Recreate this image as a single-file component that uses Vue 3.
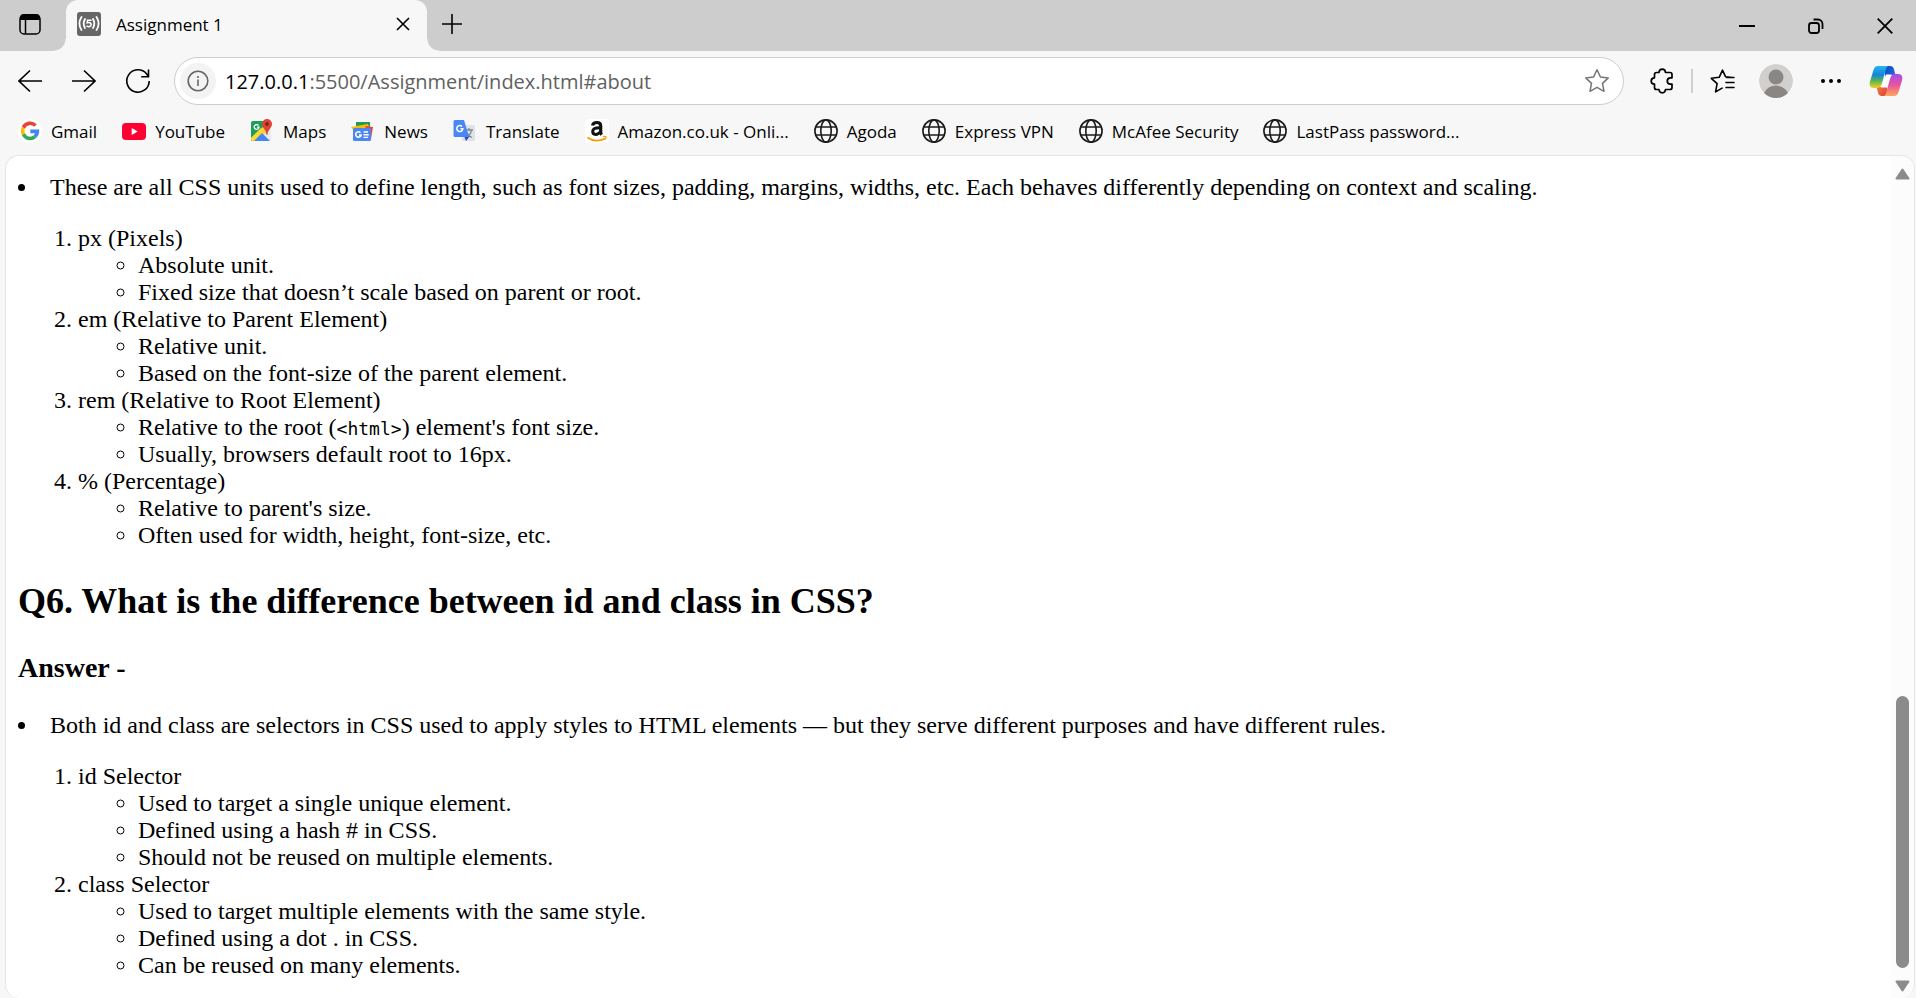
<script setup>
const bookmarks = [
  { label: 'Gmail', icon: 'google' },
  { label: 'YouTube', icon: 'youtube' },
  { label: 'Maps', icon: 'maps' },
  { label: 'News', icon: 'news' },
  { label: 'Translate', icon: 'translate' },
  { label: 'Amazon.co.uk - Onli...', icon: 'amazon' },
  { label: 'Agoda', icon: 'globe' },
  { label: 'Express VPN', icon: 'globe' },
  { label: 'McAfee Security', icon: 'globe' },
  { label: 'LastPass password...', icon: 'globe' },
]

const units = [
  { title: 'px (Pixels)', points: ['Absolute unit.', 'Fixed size that doesn’t scale based on parent or root.'] },
  { title: 'em (Relative to Parent Element)', points: ['Relative unit.', 'Based on the font-size of the parent element.'] },
  {
    title: 'rem (Relative to Root Element)',
    points: [['Relative to the root (', '<html>', ") element's font size."], 'Usually, browsers default root to 16px.'],
  },
  { title: '% (Percentage)', points: ["Relative to parent's size.", 'Often used for width, height, font-size, etc.'] },
]

const selectors = [
  {
    title: 'id Selector',
    points: ['Used to target a single unique element.', 'Defined using a hash # in CSS.', 'Should not be reused on multiple elements.'],
  },
  {
    title: 'class Selector',
    points: ['Used to target multiple elements with the same style.', 'Defined using a dot . in CSS.', 'Can be reused on many elements.'],
  },
]
</script>

<template>
  <div class="browser">
    <header class="tabstrip">
      <button class="workspaces" aria-label="Tab actions menu">
        <svg width="24" height="24" viewBox="0 0 24 24" fill="none" stroke="#000">
          <rect x="2" y="3" width="20" height="19" rx="4" stroke-width="1.5" />
          <path d="M2 8V6a4 4 0 0 1 4-4h12a4 4 0 0 1 4 4v2z" fill="#000" stroke="none" />
          <path d="M7.500 7.500V22" stroke-width="1.500" />
        </svg>
      </button>
      <div class="tab">
        <svg class="favicon" width="24" height="24" viewBox="0 0 24 24">
          <rect width="24" height="24" rx="3" fill="#666" />
          <g fill="none" stroke="#fff" stroke-width="1.800" stroke-linecap="round">
            <path d="M4.500 5a12 12 0 0 0 0 13M8 7a9 9 0 0 0 0 9M19.500 5a12 12 0 0 1 0 13M16 7a9 9 0 0 1 0 9" />
            <path d="M14 8.300h-3.500l-.3 2.600c2-.7 4-.1 4 1.700 0 2-2.500 2.600-4.200 1.500" stroke-width="1.500" />
          </g>
        </svg>
        <span class="tab-title">Assignment 1</span>
        <button class="tab-close" aria-label="Close tab">
          <svg width="14" height="14" viewBox="0 0 14 14" stroke="#000" stroke-width="1.600"><path d="M1 1l12 12M13 1L1 13" /></svg>
        </button>
      </div>
      <button class="newtab" aria-label="New tab">
        <svg width="22" height="22" viewBox="0 0 22 22" stroke="#000" stroke-width="1.600"><path d="M11 1v20M1 11h20" /></svg>
      </button>
      <div class="window-controls">
        <button aria-label="Minimize">
          <svg width="16" height="16" viewBox="0 0 16 16" stroke="#000" stroke-width="2"><path d="M0 8h16" /></svg>
        </button>
        <button aria-label="Restore">
          <svg width="16" height="16" viewBox="0 0 16 16" fill="none" stroke="#000" stroke-width="1.800">
            <rect x="1" y="5" width="10" height="10" rx="2.500" />
            <path d="M5.500 1.500H10a4.500 4.500 0 0 1 4.500 4.500v5" />
          </svg>
        </button>
        <button aria-label="Close">
          <svg width="16" height="16" viewBox="0 0 16 16" stroke="#000" stroke-width="1.800"><path d="M.7.700l14.600 14.600M15.300.700L.7 15.300" /></svg>
        </button>
      </div>
    </header>

    <nav class="toolbar">
      <button class="tool" aria-label="Back">
        <svg width="24" height="24" viewBox="0 0 24 24" fill="none" stroke="#000" stroke-width="1.600"><path d="M24 12H.8M12 1.500L1 12l11 10.500" /></svg>
      </button>
      <button class="tool" aria-label="Forward">
        <svg width="24" height="24" viewBox="0 0 24 24" fill="none" stroke="#000" stroke-width="1.600"><path d="M0 12h23.200M12 1.500L23 12 12 22.500" /></svg>
      </button>
      <button class="tool" aria-label="Refresh">
        <svg width="26" height="26" viewBox="0 0 26 26" fill="none" stroke="#000" stroke-width="1.600">
          <path d="M24.200 13A11.200 11.200 0 1 1 21.500 5.700L23.500 8.500M23.500 1.500v7.200h-7.300" />
        </svg>
      </button>
      <div class="address">
        <button class="site-info" aria-label="View site information">
          <svg width="22" height="22" viewBox="0 0 22 22" fill="none" stroke="#666" stroke-width="1.600">
            <circle cx="11" cy="11" r="9.800" />
            <path d="M11 9.500v6.500" />
            <path d="M11 6v2" />
          </svg>
        </button>
        <a class="url" href="#about"><b>127.0.0.1</b>:5500/Assignment/index.html#about</a>
        <button class="favorite" aria-label="Add to favorites">
          <svg width="26" height="26" viewBox="0 0 26 26" fill="none" stroke="#767676" stroke-width="1.500" stroke-linejoin="round">
            <path d="M13 1.700l3.400 7.200 7.900 1-5.800 5.500 1.500 7.900-7-3.900-7 3.900 1.500-7.900L1.700 9.900l7.900-1z" />
          </svg>
        </button>
      </div>
      <div class="actions">
        <button class="ext" aria-label="Extensions">
          <svg width="24" height="26" viewBox="0 0 24 26" fill="none" stroke="#000" stroke-width="1.700" stroke-linejoin="round">
            <path d="M6.500 4.500H9c.3-4.400 6.200-4.400 6.500 0H20a2 2 0 0 1 2 2v3.300h-1.500c-4.300.2-4.300 6.200 0 6.400H22v3.300a2 2 0 0 1-2 2h-4.500c-.3 4.400-6.200 4.400-6.500 0H6.500a2 2 0 0 1-2-2v-3.300c-4.400-.2-4.400-6.200 0-6.400V6.500a2 2 0 0 1 2-2z" />
          </svg>
        </button>
        <span class="divider"></span>
        <button class="favs" aria-label="Favorites">
          <svg width="25" height="25" viewBox="0 0 25 25" fill="none" stroke="#000" stroke-width="1.600" stroke-linejoin="round" stroke-linecap="round">
            <path d="M22.500 8.500l-7-.8-3-6.500-3.300 7.100-7.900 1 5.800 5.400-1.500 8.200 6.500-3.800M16.500 8.500H24M16 13.500h8M16 18.500h8" />
          </svg>
        </button>
        <button class="profile" aria-label="Profile">
          <svg width="34" height="34" viewBox="0 0 34 34">
            <defs><clipPath id="avatar"><circle cx="17" cy="17" r="17" /></clipPath></defs>
            <g clip-path="url(#avatar)">
              <circle cx="17" cy="17" r="17" fill="#d2d0ce" />
              <circle cx="17" cy="13" r="7.500" fill="#8a8684" />
              <ellipse cx="17" cy="34" rx="13" ry="12.500" fill="#8a8684" />
            </g>
          </svg>
        </button>
        <button class="more" aria-label="Settings and more">
          <svg width="20" height="6" viewBox="0 0 20 6"><circle cx="2" cy="3" r="2" /><circle cx="10" cy="3" r="2" /><circle cx="18" cy="3" r="2" /></svg>
        </button>
        <button class="copilot" aria-label="Copilot">
          <svg width="34" height="32" viewBox="0 0 34 32">
            <defs>
              <linearGradient id="cpa" x1="0" y1="0" x2="0" y2="1"><stop offset="0" stop-color="#25b7f0" /><stop offset=".4" stop-color="#1583e0" /><stop offset=".65" stop-color="#4fb35c" /><stop offset="1" stop-color="#f6cf1a" /></linearGradient>
              <linearGradient id="cpb" x1="0" y1="0" x2="0" y2="1"><stop offset="0" stop-color="#a04df0" /><stop offset=".5" stop-color="#e8549c" /><stop offset="1" stop-color="#ffa85c" /></linearGradient>
              <linearGradient id="cpc" x1="0" y1="0" x2="1" y2="1"><stop offset="0" stop-color="#0a49c0" /><stop offset="1" stop-color="#2a6fe8" /></linearGradient>
              <linearGradient id="cpd" x1="0" y1="0" x2="1" y2="1"><stop offset="0" stop-color="#fb8a3c" /><stop offset="1" stop-color="#d93a3a" /></linearGradient>
            </defs>
            <path d="M16 1h5c2.500 0 3.500 1.500 4 3.500L26.500 10H20c-2 0-3 .5-4 3z" fill="url(#cpc)" />
            <path d="M18 31h-5c-2.500 0-3.500-1.500-4-3.500L7.500 22H14c2 0 3-.5 4-3z" fill="url(#cpd)" />
            <path d="M17 9.500h5.500L18 22.500h-6z" fill="#fff" />
            <path d="M9 1h11c-2 0-2.800 2-3.300 4l-4 14c-.7 2.300-2 4-4.700 4H4.500C1 23 0 20 1 16.500L4.500 5C5.300 2.500 6.500 1 9 1z" fill="url(#cpa)" />
            <path d="M25 31H14c2 0 2.800-2 3.300-4l4-14c.7-2.300 2-4 4.700-4h3.500c3.500 0 4.500 3 3.500 6.500L29.500 27c-.8 2.500-2 4-4.500 4z" fill="url(#cpb)" />
          </svg>
        </button>
      </div>
    </nav>

    <nav class="bookmarks" aria-label="Favorites bar">
      <a v-for="b in bookmarks" :key="b.label" href="#" class="bookmark">
        <svg v-if="b.icon === 'google'" width="24" height="24" viewBox="0 0 24 24">
          <circle cx="12" cy="12" r="12" fill="#fff" />
          <g fill="none" stroke-width="3.600">
            <path d="M17.500 6.500A7.400 7.400 0 0 0 5.400 8.700" stroke="#ea4335" />
            <path d="M5.400 8.700a7.400 7.400 0 0 0 0 6.600" stroke="#fbbc05" />
            <path d="M5.400 15.300a7.400 7.400 0 0 0 11.600 2.300" stroke="#34a853" />
            <path d="M17 17.600a7.400 7.400 0 0 0 2.400-5.200H12.300" stroke="#4285f4" />
          </g>
        </svg>
        <svg v-else-if="b.icon === 'youtube'" width="24" height="24" viewBox="0 0 24 24">
          <rect y="4" width="24" height="17" rx="4" fill="#ff0033" />
          <path d="M9.700 9v7l6-3.500z" fill="#fff" />
        </svg>
        <svg v-else-if="b.icon === 'maps'" width="24" height="24" viewBox="0 0 24 24">
          <rect x="1" y="2" width="20" height="20" rx="2" fill="#e8eaed" />
          <path d="M3 2h13v6L2 22H1V4a2 2 0 0 1 2-2z" fill="#1e9e58" />
          <path d="M1 19L15 6l3 6L7 22H3a2 2 0 0 1-2-2z" fill="#fdd835" />
          <path d="M4 22l8-8 8 8z" fill="#4285f4" />
          <path d="M1 19L11 9l2 3L3 22a2 2 0 0 1-2-2z" fill="#fdd835" />
          <path d="M8.500 6.500A2.400 2.400 0 1 0 9 8.200H7" fill="none" stroke="#fff" stroke-width="1.300" />
          <path d="M17 0a5 5 0 0 1 5 5c0 4-4 5-4.600 11h-.8C16 10 12 9 12 5a5 5 0 0 1 5-5z" fill="#dc4437" />
          <circle cx="17" cy="5" r="1.900" fill="#7b231c" />
        </svg>
        <svg v-else-if="b.icon === 'news'" width="24" height="24" viewBox="0 0 24 24">
          <path d="M5 3h14v8H5z" fill="#1e9e58" />
          <path d="M0 8l17-3 2 7H3z" fill="#fbbc04" />
          <path d="M14 7l8 1-2 12z" fill="#ea4335" />
          <rect x="2" y="9" width="18" height="13" rx="1.500" fill="#4a86f5" />
          <path d="M9.500 13.700a2.700 2.700 0 1 0 .6 2.300H8" fill="none" stroke="#fff" stroke-width="1.600" />
          <path d="M12.500 13H17M12.500 15.700h5.300M12.500 18.400H17" stroke="#fff" stroke-width="1.400" />
        </svg>
        <svg v-else-if="b.icon === 'translate'" width="24" height="24" viewBox="0 0 24 24">
          <rect x="9" y="6" width="13" height="16" rx="1.500" fill="#dfe2e6" />
          <path d="M12 11h8M16 9v2M18.500 11c-.5 3.500-3 6-5.500 7M13.500 13c1 2.500 3 4.500 5.500 5.500" fill="none" stroke="#7d8a94" stroke-width="1.300" />
          <path d="M11 17h6l-4 5z" fill="#3949ab" />
          <path d="M2 1h9l5 17H2a1.500 1.500 0 0 1-1.500-1.500v-14A1.500 1.500 0 0 1 2 1z" fill="#4a86f5" />
          <path d="M9 7.500a3 3 0 1 0 .8 2.300H7.500" fill="none" stroke="#fff" stroke-width="1.600" />
        </svg>
        <svg v-else-if="b.icon === 'amazon'" width="24" height="24" viewBox="0 0 24 24">
          <rect width="24" height="24" rx="4" fill="#fff" />
          <path d="M7.500 6.500C8 3.800 10 3.500 12 3.500s3.700 1 3.700 3.500v6.300c0 1.200.4 1.700 1 2.500" fill="none" stroke="#111" stroke-width="3.200" />
          <path d="M15 8.700c-4.500 0-7.300.8-7.300 3.900 0 3.800 5.300 3.500 7.300.4" fill="none" stroke="#111" stroke-width="3" />
          <path d="M2.500 18.500c5.500 4 12.500 4 17.500 1" fill="none" stroke="#ff9900" stroke-width="1.800" />
          <path d="M18 17.700c1.500-.4 2.700-.4 3 0 .2.600-.2 2-1.200 3" fill="none" stroke="#ff9900" stroke-width="1.200" />
        </svg>
        <svg v-else width="24" height="24" viewBox="0 0 24 24" fill="none" stroke="#1b1b1b" stroke-width="1.600">
          <circle cx="12" cy="12" r="11.100" />
          <ellipse cx="12" cy="12" rx="5.200" ry="11.100" />
          <path d="M1.700 8h20.600M1.700 16h20.600" />
        </svg>
        <span>{{ b.label }}</span>
      </a>
    </nav>

    <div class="viewport">
      <main class="document">
        <ul class="lead"><li>These are all CSS units used to define length, such as font sizes, padding, margins, widths, etc. Each behaves differently depending on context and scaling.</li></ul>
        <ol>
          <li v-for="u in units" :key="u.title">
            {{ u.title }}
            <ul>
              <li v-for="(p, i) in u.points" :key="i">
                <template v-if="Array.isArray(p)">{{ p[0] }}<code>{{ p[1] }}</code>{{ p[2] }}</template>
                <template v-else>{{ p }}</template>
              </li>
            </ul>
          </li>
        </ol>
        <h2 id="about">Q6. What is the difference between id and class in CSS?</h2>
        <h3>Answer -</h3>
        <ul class="lead"><li>Both id and class are selectors in CSS used to apply styles to HTML elements — but they serve different purposes and have different rules.</li></ul>
        <ol>
          <li v-for="s in selectors" :key="s.title">
            {{ s.title }}
            <ul>
              <li v-for="p in s.points" :key="p">{{ p }}</li>
            </ul>
          </li>
        </ol>
      </main>
      <div class="scrollbar" aria-hidden="true">
        <svg width="15" height="12" viewBox="0 0 15 12" fill="#8b8b8b" stroke="#8b8b8b" stroke-width="2" stroke-linejoin="round"><path d="M7.500 1.500L13.500 10.500h-12z" /></svg>
        <div class="track"><div class="thumb"></div></div>
        <svg width="15" height="12" viewBox="0 0 15 12" fill="#8b8b8b" stroke="#8b8b8b" stroke-width="2" stroke-linejoin="round"><path d="M7.500 10.500L13.500 1.500h-12z" /></svg>
      </div>
    </div>
  </div>
</template>

<style>
body {
  margin: 0;
  background: #f7f7f7;
}
</style>

<style scoped>
.browser {
  display: flex;
  flex-direction: column;
  height: 100vh;
  overflow: hidden;
  background: #f7f7f7;
  color: #000;
  font-family: "Open Sans", "Noto Sans", sans-serif;
  font-size: 17px;
}
button {
  display: flex;
  align-items: center;
  justify-content: center;
  padding: 0;
  border: 0;
  background: none;
  color: inherit;
  font: inherit;
}
svg {
  display: block;
  flex: none;
}
.tabstrip {
  display: flex;
  flex: none;
  height: 51px;
  background: #cdcdcd;
}
.workspaces {
  width: 60px;
  height: 48px;
}
.tab {
  position: relative;
  display: flex;
  align-items: center;
  box-sizing: border-box;
  width: 361px;
  height: 51px;
  margin-left: 6px;
  padding: 0 14px 3px 11px;
  border-radius: 12px 12px 0 0;
  background: #f7f7f7;
}
.tab::before,
.tab::after {
  content: "";
  position: absolute;
  bottom: 0;
  width: 12px;
  height: 12px;
}
.tab::before {
  right: 100%;
  background: radial-gradient(circle at 0 0, transparent 11px, #f7f7f7 12px);
}
.tab::after {
  left: 100%;
  background: radial-gradient(circle at 100% 0, transparent 11px, #f7f7f7 12px);
}
.tab-title {
  flex: 1;
  margin-left: 15px;
}
.tab-close {
  width: 20px;
  height: 20px;
}
.newtab {
  width: 50px;
  height: 48px;
}
.window-controls {
  display: flex;
  margin: 0 -3px 0 auto;
}
.window-controls button {
  width: 69px;
  height: 51px;
}
.toolbar {
  display: flex;
  flex: none;
  align-items: center;
  height: 60px;
}
.tool {
  width: 54px;
  height: 48px;
}
.tool:first-child {
  margin-left: 3px;
}
.address {
  display: flex;
  flex: 1;
  align-items: center;
  box-sizing: border-box;
  height: 48px;
  margin-left: 9px;
  padding: 0 13px 0 5px;
  border: 1px solid #cdcdcd;
  border-radius: 24px;
  background: #fff;
}
.site-info {
  width: 36px;
  height: 36px;
  border-radius: 50%;
  background: #f3f3f3;
}
.url {
  flex: 1;
  margin-left: 9px;
  color: #616161;
  font-size: 20px;
  text-decoration: none;
}
.url b {
  color: #000;
  font-weight: 400;
}
.actions {
  display: flex;
  align-items: center;
  padding: 0 13px 0 26px;
}
.divider {
  width: 2px;
  height: 24px;
  margin: 0 17px;
  background: #cfcfcf;
}
.profile {
  margin-left: 24px;
}
.more {
  width: 76px;
  height: 48px;
}
.bookmarks {
  display: flex;
  flex: none;
  align-items: center;
  gap: 25px;
  height: 40px;
  padding: 0 18px 2px;
}
.bookmark {
  display: flex;
  align-items: center;
  gap: 9px;
  color: #000;
  text-decoration: none;
  white-space: nowrap;
}
.viewport {
  display: flex;
  flex: 1;
  min-height: 0;
  margin: 2px 1px 0 5px;
  overflow: hidden;
  border: 1px solid #e5e5e5;
  border-bottom: 0;
  border-radius: 14px;
  background: #fff;
}
.document {
  flex: 1;
  padding: 18px 12px 0;
  font-family: "Liberation Serif", "Times New Roman", serif;
  font-size: 24px;
  line-height: 27px;
}
ul,
ol {
  margin: 0;
  padding-left: 60px;
}
ol {
  margin: 24px 0 32px;
}
ol ul {
  list-style: circle;
}
ul.lead {
  padding-left: 32px;
  list-style: none;
}
ul.lead li::before {
  content: "";
  display: inline-block;
  width: 7px;
  height: 7px;
  margin: 0 25px 4px -32px;
  border-radius: 50%;
  background: #000;
}
code {
  font-family: "DejaVu Sans Mono", "Liberation Mono", monospace;
  font-size: 18px;
  line-height: 18px;
}
h2 {
  margin: 0 0 30px;
  font-size: 36px;
  line-height: 41px;
}
h3 {
  margin: 0 0 28px;
  font-size: 28px;
  line-height: 32px;
}
.scrollbar {
  display: flex;
  flex-direction: column;
  align-items: center;
  width: 23px;
  padding: 12px 0 6px;
  background: #fcfcfc;
}
.track {
  flex: 1;
  display: flex;
  flex-direction: column;
  justify-content: flex-end;
  padding: 12px 0;
}
.thumb {
  width: 13px;
  height: 35%;
  border-radius: 7px;
  background: #8b8b8b;
}
</style>
